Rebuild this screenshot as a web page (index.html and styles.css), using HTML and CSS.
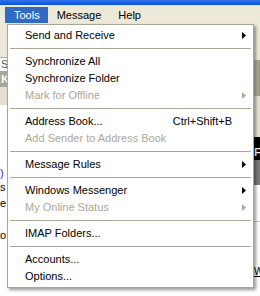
FILE: index.html
```html
<!DOCTYPE html>
<html lang="en">
<head>
    <meta charset="UTF-8">
    <title>Tools menu</title>
    <link rel="stylesheet" href="styles.css">
</head>
<body>
    <div class="titlebar"></div>
    <div class="menubar">
        <span class="menubar-item active">Tools</span>
        <span class="menubar-item">Message</span>
        <span class="menubar-item">Help</span>
    </div>
    <div class="workspace">
        <div class="leftpane">
            <div class="lp-top"></div>
            <div class="lp-field">Se</div>
            <div class="lp-tool">K</div>
            <div class="lp-band"></div>
            <div class="lp-text">
                <span class="frag blue">)</span>
                <span class="frag s1">s</span>
                <span class="frag s2">e</span>
                <span class="frag s3">o:</span>
            </div>
        </div>
        <div class="rightpane">
            <div class="rp-top"></div>
            <div class="rp-grip"></div>
            <div class="rp-light"></div>
            <div class="rp-dark">F</div>
            <div class="rp-grey"></div>
            <div class="rp-white">
                <span class="rp-line"></span>
                <span class="rp-w">W</span>
            </div>
        </div>
    </div>

    <div class="menu">
        <div class="item">Send and Receive<span class="sub"><svg width="4" height="7"><polygon points="0,0 4,3.5 0,7" /></svg></span></div>
        <div class="sep"></div>
        <div class="item">Synchronize All<span class="sub"></span></div>
        <div class="item">Synchronize Folder<span class="sub"></span></div>
        <div class="item disabled">Mark for Offline<span class="sub"><svg width="4" height="7"><polygon points="0,0 4,3.5 0,7" /></svg></span></div>
        <div class="sep"></div>
        <div class="item">Address Book...<span class="key">Ctrl+Shift+B</span><span class="sub"></span></div>
        <div class="item disabled">Add Sender to Address Book<span class="sub"></span></div>
        <div class="sep"></div>
        <div class="item">Message Rules<span class="sub"><svg width="4" height="7"><polygon points="0,0 4,3.5 0,7" /></svg></span></div>
        <div class="sep"></div>
        <div class="item">Windows Messenger<span class="sub"><svg width="4" height="7"><polygon points="0,0 4,3.5 0,7" /></svg></span></div>
        <div class="item disabled">My Online Status<span class="sub"><svg width="4" height="7"><polygon points="0,0 4,3.5 0,7" /></svg></span></div>
        <div class="sep"></div>
        <div class="item">IMAP Folders...<span class="sub"></span></div>
        <div class="sep"></div>
        <div class="item">Accounts...<span class="sub"></span></div>
        <div class="item">Options...<span class="sub"></span></div>
    </div>
</body>
</html>
```
FILE: styles.css
```css
body {
    margin: 0;
    width: 260px;
    height: 296px;
    overflow: hidden;
    background-color: #fff;
    font-family: "Liberation Sans", Arial, sans-serif;
    font-size: 11px;
    position: relative;
}
.titlebar {
    height: 5px;
    background: linear-gradient(#2f72ec, #0a52dc);
}
.menubar {
    height: 19px;
    background-color: #ece9d8;
    display: flex;
    padding-left: 5px;
    box-sizing: border-box;
    padding-top: 2px;
}
.menubar-item {
    height: 16px;
    line-height: 16px;
    padding: 0 8px 0 9px;
    color: #000;
}
.menubar-item.active {
    background-color: #316ac5;
    color: #fff;
}
.workspace {
    display: flex;
    justify-content: space-between;
    height: 272px;
}
.leftpane {
    width: 7px;
    display: flex;
    flex-direction: column;
    overflow: hidden;
}
.lp-top {
    height: 33px;
    background-color: #ece9d8;
}
.lp-field {
    height: 13px;
    line-height: 13px;
    border-top: 1px solid #b8b4a4;
    background-color: #fff;
    color: #555;
    padding-left: 1px;
}
.lp-tool {
    height: 16px;
    line-height: 16px;
    background-color: #a8a69c;
    color: #fff;
    font-weight: bold;
    padding-left: 1px;
}
.lp-band {
    height: 18px;
    background-color: #e2dfd0;
}
.lp-text {
    flex: 1;
    display: flex;
    flex-direction: column;
    color: #000;
}
.frag {
    line-height: 12px;
    height: 12px;
}
.frag.blue {
    color: #1c2ee0;
    margin-top: 62px;
}
.frag.s1 {
    margin-top: 2px;
}
.frag.s2 {
    margin-top: 4px;
}
.frag.s3 {
    margin-top: 20px;
}
.rightpane {
    width: 6px;
    display: flex;
    flex-direction: column;
    overflow: hidden;
}
.rp-top {
    height: 36px;
    background-color: #ece9d8;
}
.rp-grip {
    height: 36px;
    background: linear-gradient(90deg, #c6c2b2, #9c9888);
}
.rp-light {
    height: 41px;
    background-color: #e6e3d8;
}
.rp-dark {
    height: 23px;
    background-color: #000;
    color: #fff;
    font-weight: bold;
    line-height: 30px;
}
.rp-grey {
    height: 25px;
    background-color: #7a7a7a;
}
.rp-white {
    flex: 1;
    position: relative;
}
.rp-line {
    display: block;
    height: 1px;
    background-color: #c8c8c8;
    margin-top: 36px;
}
.rp-w {
    display: block;
    margin-top: 44px;
    text-decoration: underline;
    font-size: 10px;
}
.menu {
    position: absolute;
    left: 7px;
    top: 24px;
    width: 247px;
    box-sizing: border-box;
    border: 1px solid #aca899;
    background-color: #fff;
    padding: 2px;
    box-shadow: 2px 2px 3px rgba(0, 0, 0, 0.4);
}
.item {
    display: flex;
    height: 17px;
    line-height: 17px;
    padding-left: 15px;
    color: #000;
    white-space: nowrap;
}
.item.disabled {
    color: #aca899;
}
.key {
    margin-left: auto;
}
.sub {
    width: 19px;
    margin-left: auto;
    display: flex;
    align-items: center;
    padding-left: 10px;
    box-sizing: border-box;
}
.key + .sub {
    margin-left: 0;
}
.sub polygon {
    fill: #000;
}
.disabled .sub polygon {
    fill: #aca899;
}
.sep {
    height: 9px;
    display: flex;
    align-items: center;
}
.sep::after {
    content: "";
    display: block;
    height: 1px;
    width: 100%;
    background-color: #aca899;
}
```
